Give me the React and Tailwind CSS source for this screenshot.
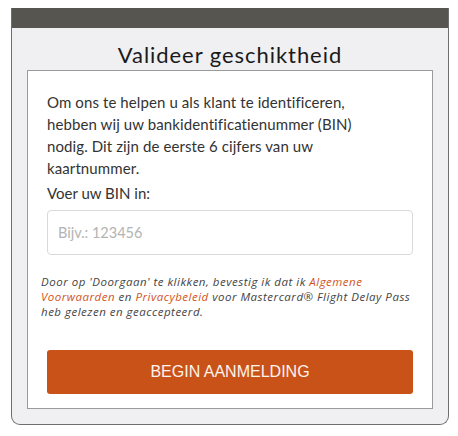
export default function App() {
  return (
    <div className="w-[458px] h-[436px] bg-white pt-[8px] pl-[11px]" style={{ fontFamily: "Lato, 'Noto Sans', sans-serif" }}>
      <div className="w-[438px] bg-[#f0f0f2] border-x border-b border-[#6e6e6e] rounded-b-[9px] overflow-hidden">
        <div className="h-[20px] bg-[#57554f]" />
        <div className="pt-[13px] pb-[1px] text-center text-[22px] leading-[28px] text-[#1a1a1a] tracking-[0.95px]">
          Valideer geschiktheid
        </div>
        <div className="mx-[15px] mb-[15px] bg-white border border-[#9a9a9a] px-[19px] pt-[20px] pb-[14px]">
          <p className="text-[15px] leading-[22px] text-[#333] tracking-[0.1px]">
            Om ons te helpen u als klant te identificeren,<br />
            hebben wij uw bankidentificatienummer (BIN)<br />
            nodig. Dit zijn de eerste 6 cijfers van uw<br />
            kaartnummer.
          </p>
          <div className="mt-[3px] text-[15px] leading-[22px] text-[#333]">Voer uw BIN in:</div>
          <div className="mt-[6px] h-[45px] border border-[#d9d9d9] rounded-[4px] flex items-center pl-[10px] text-[14.5px] text-[#b3b3b3]">
            Bijv.: 123456
          </div>
          <p className="mt-[19px] ml-[-6px] mr-[-16px] text-[11.5px] leading-[15px] italic text-[#444] tracking-[0.5px]" style={{ fontFamily: "'Open Sans', Lato, sans-serif" }}>
            Door op 'Doorgaan' te klikken, bevestig ik dat ik <span className="text-[#d2541c]">Algemene</span><br />
            <span className="text-[#d2541c]">Voorwaarden</span> en <span className="text-[#d2541c]">Privacybeleid</span> voor Mastercard® Flight Delay Pass<br />
            heb gelezen en geaccepteerd.
          </p>
          <button className="mt-[31px] w-full h-[44px] rounded-[3px] bg-[#c95218] text-[#fdf3ec] text-[16px] flex items-center justify-center" style={{ fontFamily: "'Liberation Sans', Arial, sans-serif" }}>
            BEGIN AANMELDING
          </button>
        </div>
      </div>
    </div>
  );
}
